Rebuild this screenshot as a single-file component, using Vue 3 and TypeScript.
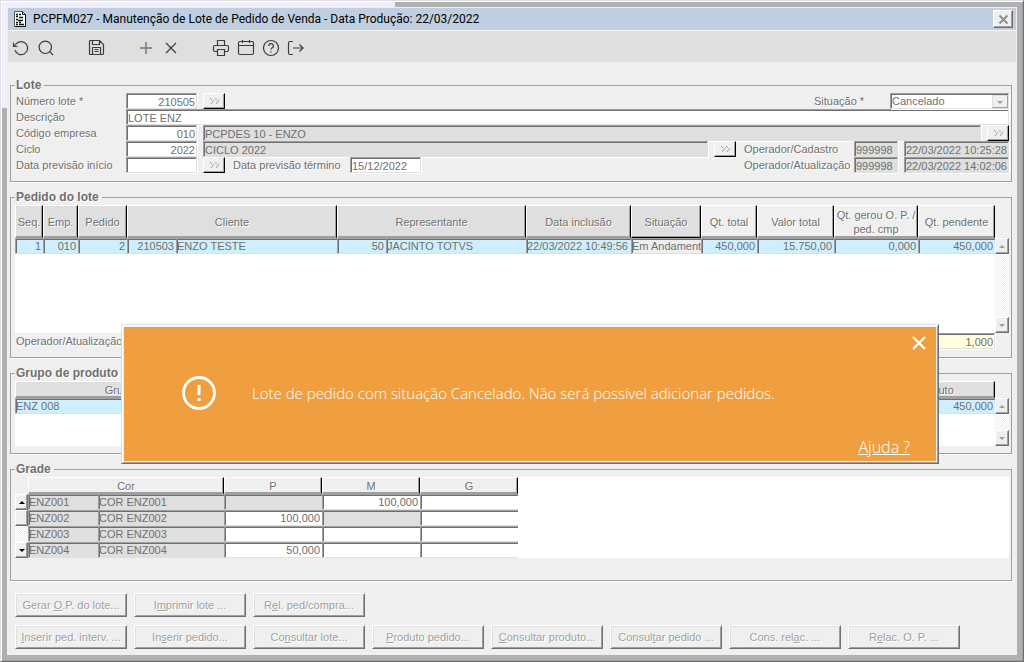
<script setup lang="ts">
import { ref } from 'vue'

interface Order {
  seq: string
  company: string
  order: string
  clientId: string
  client: string
  repId: string
  rep: string
  included: string
  status: string
  total: string
  value: string
  generated: string
  pending: string
}

interface GradeRow {
  code: string
  name: string
  sizes: (string | null)[]
}

interface Action {
  before: string
  key: string
  after: string
}

const orders: Order[] = [
  {
    seq: '1', company: '010', order: '2', clientId: '210503', client: 'ENZO TESTE',
    repId: '50', rep: 'JACINTO TOTVS', included: '22/03/2022 10:49:56', status: 'Em Andament',
    total: '450,000', value: '15.750,00', generated: '0,000', pending: '450,000',
  },
]

// null marks a size that is not available for the colour
const grades: GradeRow[] = [
  { code: 'ENZ001', name: 'COR ENZ001', sizes: [null, '100,000', ''] },
  { code: 'ENZ002', name: 'COR ENZ002', sizes: ['100,000', null, ''] },
  { code: 'ENZ003', name: 'COR ENZ003', sizes: ['', '', ''] },
  { code: 'ENZ004', name: 'COR ENZ004', sizes: ['50,000', '', ''] },
]

const actionRows: Action[][] = [
  [
    { before: 'Gerar ', key: 'O', after: '.P. do lote...' },
    { before: 'I', key: 'm', after: 'primir lote ...' },
    { before: 'R', key: 'e', after: 'l. ped/compra...' },
  ],
  [
    { before: '', key: 'I', after: 'nserir ped. interv. ...' },
    { before: 'In', key: 's', after: 'erir pedido...' },
    { before: 'Co', key: 'n', after: 'sultar lote...' },
    { before: '', key: 'P', after: 'roduto pedido...' },
    { before: '', key: 'C', after: 'onsultar produto...' },
    { before: 'Consul', key: 't', after: 'ar pedido ...' },
    { before: 'Cons. rel', key: 'a', after: 'c. ...' },
    { before: 'R', key: 'e', after: 'lac. O. P. ...' },
  ],
]

const situation = ref('Cancelado')
const showMessage = ref(true)
</script>

<template>
  <div class="frame">
    <main class="window">
      <header class="title-bar">
        <svg class="doc-icon" width="14" height="18" viewBox="0 0 14 18" aria-hidden="true">
          <path d="M1.5 1.5H9.5L12.5 4.5V16.5H1.5Z" fill="#fff" stroke="#555" />
          <path d="M9.5 1.5V4.5H12.5M12.5 5V16.5H2" fill="none" stroke="#111" />
          <path d="M3 4.5H5M6 4.5H8M3 6.5H5M6 7.5H10M3 9.5H5M5 10.5H10M3 12.5H5M6 12.5H8M3 14.5H5M6 14.5H11" stroke="#111" stroke-width="1.4" />
        </svg>
        <h1>PCPFM027 - Manutenção de Lote de Pedido de Venda - Data Produção: 22/03/2022</h1>
        <button class="close" type="button" aria-label="Fechar">
          <svg width="11" height="11" viewBox="0 0 11 11"><path d="M1.5 1.5L9.5 9.5M9.5 1.5L1.5 9.5" stroke="#8f8f8f" stroke-width="2" /></svg>
        </button>
      </header>

      <nav class="toolbar" aria-label="Ferramentas">
        <button type="button" aria-label="Desfazer">
          <svg viewBox="0 0 18 18"><path d="M1.5 3.5V7.5H5.5M1.9 7.2L4.7 4.4A6.5 6.5 0 1 1 3 11.3" /></svg>
        </button>
        <button type="button" aria-label="Pesquisar">
          <svg viewBox="0 0 18 18"><circle cx="8.3" cy="8.3" r="6.2" /><path d="M12.8 12.8L16 16" /></svg>
        </button>
        <button class="at-4" type="button" aria-label="Salvar">
          <svg viewBox="0 0 18 18"><path d="M3.5 1.5H12.5L16.5 5.5V14.5Q16.5 15.5 15.5 15.5H3.5Q2.5 15.5 2.5 14.5V2.5Q2.5 1.5 3.5 1.5ZM5.5 1.5V5.5H12.5V2M5.5 15.5V8.500H13.500V15.500M7.500 10.500H11.500M7.500 12.500H11.500" /></svg>
        </button>
        <button class="at-6 pale" type="button" aria-label="Incluir">
          <svg viewBox="0 0 18 18"><path d="M9 3V15M3 9H15" /></svg>
        </button>
        <button type="button" aria-label="Excluir">
          <svg viewBox="0 0 18 18"><path d="M4 4L14 14M14 4L4 14" /></svg>
        </button>
        <button class="at-9" type="button" aria-label="Imprimir">
          <svg viewBox="0 0 18 18"><path d="M5.500 6.500V1.500H12.500V6.500M5.500 12.500H3Q1.500 12.500 1.500 11V8Q1.500 6.500 3 6.500H15Q16.500 6.500 16.500 8V11Q16.500 12.500 15 12.500H12.500M5.500 10.500H12.500V16.500H5.500Z" /></svg>
        </button>
        <button type="button" aria-label="Calendário">
          <svg viewBox="0 0 18 18"><path d="M3 2.500H15Q16.500 2.500 16.500 4V14Q16.500 15.500 15 15.500H3Q1.500 15.500 1.500 14V4Q1.500 2.500 3 2.500ZM1.500 6.500H16.500M5.500 1V4M12.500 1V4" /></svg>
        </button>
        <button type="button" aria-label="Ajuda">
          <svg viewBox="0 0 18 18"><circle cx="9" cy="9" r="7.500" /><path d="M6.800 7A2.300 2.300 0 1 1 9.900 9Q9 9.400 9 10.500M9 12.200V13.400" /></svg>
        </button>
        <button type="button" aria-label="Sair">
          <svg viewBox="0 0 18 18"><path d="M6 2.500H3Q1.500 2.500 1.500 4V14Q1.500 15.500 3 15.500H6M6 9H16M12.500 5.500L16 9L12.500 12.500" /></svg>
        </button>
      </nav>

      <div class="content">
        <fieldset class="lot">
          <legend>Lote</legend>
          <div class="row">
            <label class="lead" for="lot-number">Número lote *</label>
            <input id="lot-number" class="short num" value="210505" />
            <button class="lookup" type="button" aria-label="Buscar lote">
              <svg viewBox="0 0 11 8"><path d="M1 1L3 3M5 3L2 7M6 1L8 3M10 3L7 7" /></svg>
            </button>
            <span class="spacer"></span>
            <label class="situation-label" for="situation">Situação *</label>
            <span class="select-box">
              <select id="situation" v-model="situation"><option>Cancelado</option></select>
              <i class="caret" aria-hidden="true"></i>
            </span>
          </div>
          <div class="row">
            <label class="lead" for="description">Descrição</label>
            <input id="description" class="grow" value="LOTE ENZ" />
          </div>
          <div class="row">
            <label class="lead" for="company">Código empresa</label>
            <input id="company" class="short num" value="010" />
            <input class="grow locked" aria-label="Empresa" readonly value="PCPDES 10 - ENZO" />
            <button class="lookup" type="button" aria-label="Buscar empresa">
              <svg viewBox="0 0 11 8"><path d="M1 1L3 3M5 3L2 7M6 1L8 3M10 3L7 7" /></svg>
            </button>
          </div>
          <div class="row">
            <label class="lead" for="cycle">Ciclo</label>
            <input id="cycle" class="short num" value="2022" />
            <input class="grow locked" aria-label="Nome do ciclo" readonly value="CICLO 2022" />
            <button class="lookup" type="button" aria-label="Buscar ciclo">
              <svg viewBox="0 0 11 8"><path d="M1 1L3 3M5 3L2 7M6 1L8 3M10 3L7 7" /></svg>
            </button>
            <label class="operator" for="op-created">Operador/Cadastro</label>
            <input id="op-created" class="code locked" readonly value="999998" />
            <input class="stamp locked" aria-label="Data de cadastro" readonly value="22/03/2022 10:25:28" />
          </div>
          <div class="row">
            <label class="lead" for="start">Data previsão início</label>
            <input id="start" class="short" value="" />
            <button class="lookup" type="button" aria-label="Abrir calendário">
              <svg viewBox="0 0 11 8"><path d="M1 1L3 3M5 3L2 7M6 1L8 3M10 3L7 7" /></svg>
            </button>
            <label class="end-label" for="end">Data previsão término</label>
            <input id="end" class="short" value="15/12/2022" />
            <span class="spacer"></span>
            <label class="operator" for="op-updated">Operador/Atualização</label>
            <input id="op-updated" class="code locked" readonly value="999998" />
            <input class="stamp locked" aria-label="Data de atualização" readonly value="22/03/2022 14:02:06" />
          </div>
        </fieldset>

        <fieldset>
          <legend>Pedido do lote</legend>
          <div class="list orders">
            <div class="sheet">
              <table>
                <colgroup>
                  <col class="w28" /><col class="w35" /><col class="w49" /><col class="w49" /><col />
                  <col class="w49" /><col class="w140" /><col class="w105" /><col class="w70" />
                  <col class="w56" /><col class="w77" /><col class="w84" /><col class="w77" />
                </colgroup>
                <thead>
                  <tr>
                    <th>Seq.</th><th>Emp.</th><th>Pedido</th><th colspan="2">Cliente</th>
                    <th colspan="2">Representante</th><th>Data inclusão</th><th class="active">Situação</th>
                    <th class="light">Qt. total</th><th class="light">Valor total</th>
                    <th class="light">Qt. gerou O. P. /<br />ped. cmp</th><th class="light">Qt. pendente</th>
                  </tr>
                </thead>
                <tbody>
                  <tr v-for="o in orders" :key="o.seq" class="selected">
                    <td class="num">{{ o.seq }}</td>
                    <td class="num">{{ o.company }}</td>
                    <td class="num">{{ o.order }}</td>
                    <td class="num">{{ o.clientId }}</td>
                    <td>{{ o.client }}</td>
                    <td class="num">{{ o.repId }}</td>
                    <td>{{ o.rep }}</td>
                    <td>{{ o.included }}</td>
                    <td class="status">{{ o.status }}</td>
                    <td class="num">{{ o.total }}</td>
                    <td class="num">{{ o.value }}</td>
                    <td class="num">{{ o.generated }}</td>
                    <td class="num">{{ o.pending }}</td>
                  </tr>
                </tbody>
              </table>
            </div>
            <div class="scroll tall">
              <button type="button" class="up" aria-label="Rolar pedidos para cima"></button>
              <button type="button" class="down" aria-label="Rolar pedidos para baixo"></button>
            </div>
          </div>
          <div class="row summary">
            <label class="grow" for="order-total">Operador/Atualização</label>
            <input id="order-total" class="total num" readonly value="1,000" />
          </div>
        </fieldset>

        <fieldset>
          <legend>Grupo de produto</legend>
          <div class="list groups">
            <div class="sheet">
              <table>
                <colgroup><col class="w210" /><col /><col class="w121" /></colgroup>
                <thead><tr><th>Grupo</th><th></th><th>Produto</th></tr></thead>
                <tbody><tr class="selected"><td>ENZ 008</td><td></td><td class="num">450,000</td></tr></tbody>
              </table>
            </div>
            <div class="scroll">
              <button type="button" class="up" aria-label="Rolar grupos para cima"></button>
              <button type="button" class="down" aria-label="Rolar grupos para baixo"></button>
            </div>
          </div>
        </fieldset>

        <fieldset class="grade">
          <legend>Grade</legend>
          <div class="list">
            <div class="scroll enabled">
              <button type="button" class="up" aria-label="Rolar grade para cima"></button>
              <span class="thumb"></span>
              <button type="button" class="down" aria-label="Rolar grade para baixo"></button>
            </div>
            <div class="sheet">
              <table>
                <colgroup>
                  <col class="w70" /><col class="w126" /><col class="w98" /><col class="w98" /><col class="w98" />
                </colgroup>
                <thead>
                  <tr><th class="light" colspan="2">Cor</th><th class="light">P</th><th class="light">M</th><th class="light">G</th></tr>
                </thead>
                <tbody>
                  <tr v-for="g in grades" :key="g.code">
                    <td class="off">{{ g.code }}</td>
                    <td class="off">{{ g.name }}</td>
                    <td v-for="(s, i) in g.sizes" :key="i" class="num" :class="{ off: s === null }">{{ s }}</td>
                  </tr>
                </tbody>
              </table>
            </div>
          </div>
        </fieldset>

        <div class="actions">
          <div v-for="(line, i) in actionRows" :key="i" class="action-row">
            <button v-for="a in line" :key="a.before + a.key + a.after" type="button">
              <span>{{ a.before }}<u>{{ a.key }}</u>{{ a.after }}</span>
            </button>
          </div>
        </div>
      </div>
    </main>

    <section v-if="showMessage" class="message" role="alertdialog" aria-labelledby="message-text">
      <button class="dismiss" type="button" aria-label="Fechar mensagem" @click="showMessage = false">
        <svg width="14" height="14" viewBox="0 0 14 14"><path d="M1 1L13 13M13 1L1 13" stroke="#fff" stroke-width="2.200" /></svg>
      </button>
      <div class="message-body">
        <svg width="34" height="34" viewBox="0 0 34 34" aria-hidden="true">
          <circle cx="17" cy="17" r="15.500" fill="none" stroke="#fff" stroke-width="2.800" />
          <path d="M17 9V19M17 22V25" stroke="#fff" stroke-width="3" />
        </svg>
        <p id="message-text">Lote de pedido com situação Cancelado. Não será possível adicionar pedidos.</p>
      </div>
      <a class="help" href="#ajuda">Ajuda ?</a>
    </section>
  </div>
</template>

<style>
body {
  margin: 0;
}
</style>

<style scoped>
* {
  box-sizing: border-box;
}

.frame {
  position: relative;
  min-height: 100vh;
  display: flex;
  padding: 6px;
  border: 1px solid #dfdfdf;
  border-right-color: #6f6f6f;
  border-bottom-color: #6f6f6f;
  box-shadow: inset 1px 1px #fff, inset -1px -1px #9f9f9f;
  background:
    linear-gradient(#f0eefd, #f0eefd) 0 0 / 394px 6px no-repeat,
    linear-gradient(#f0eefd, #f0eefd) 0 0 / 6px 107px no-repeat,
    #b0b0b0;
  font-family: "Liberation Sans", Arial, sans-serif;
  font-size: 11px;
  line-height: 14px;
  color: #6f6f6f;
}

.window {
  flex: 1;
  min-width: 0;
  border: 1px solid #efefef;
  border-bottom: 0;
  background: #efefef;
}

button,
input,
select {
  margin: 0;
  padding: 0;
  border: 0;
  border-radius: 0;
  font: inherit;
  color: inherit;
  background: none;
  outline: 0;
}

button {
  display: flex;
  align-items: center;
  justify-content: center;
}

.title-bar {
  display: flex;
  align-items: center;
  height: 23px;
  padding: 0 3px 0 5px;
  border-bottom: 1px solid #f7f7f7;
  background: #bfcfdf;
}

.title-bar h1 {
  flex: 1;
  margin: 0 0 0 6px;
  font: 400 12px/18px Roboto, "Noto Sans", sans-serif;
  color: #000;
}

.close {
  width: 20px;
  height: 18px;
  background: #efefef;
  border: 1px solid #fff;
  border-right-color: #6f6f6f;
  border-bottom-color: #6f6f6f;
  box-shadow: inset -1px -1px #9f9f9f;
}

.toolbar {
  display: grid;
  grid-template-columns: repeat(12, 25px);
  height: 31px;
  padding-top: 2px;
  align-items: center;
  background: #dfdfdf;
}

.toolbar svg {
  width: 18px;
  height: 18px;
  fill: none;
  stroke: #3c3c3c;
  stroke-width: 1.2;
}

.toolbar .pale svg {
  stroke: #777;
  stroke-width: 1.5;
}

.at-4 {
  grid-column: 4;
}

.at-6 {
  grid-column: 6;
}

.at-9 {
  grid-column: 9;
}

.content {
  padding: 15px 4px 5px 2px;
}

fieldset {
  min-width: 0;
  margin: 0 0 7px;
  padding: 0 2px 7px 4px;
  border: 1px solid #9f9f9f;
  box-shadow: 0 1px #fff;
}

.lot {
  padding-bottom: 8px;
}

legend {
  padding: 0 3px 0 1px;
  font-size: 12px;
  font-weight: 700;
  line-height: 16px;
  text-shadow: 1px 1px #fff;
}

label,
th {
  text-shadow: 1px 1px #fff;
}

label {
  padding-left: 1px;
  line-height: 16px;
  white-space: nowrap;
}

.row {
  display: flex;
  gap: 6px;
  height: 16px;
}

.row input,
.select-box {
  height: 16px;
  min-width: 0;
  padding: 1px 1px 0;
  border: 1px solid #dfdfdf;
  border-top-color: #9f9f9f;
  border-left-color: #9f9f9f;
  box-shadow: inset 1px 1px #6f6f6f, 1px 1px #fff;
  background: #fff;
}

.row .locked {
  background: #dfdfdf;
}

.lead {
  width: 105px;
}

.short {
  width: 71px;
}

.num {
  text-align: right;
}

.grow,
.spacer {
  flex: 1;
}

.situation-label {
  width: 71px;
}

.select-box {
  position: relative;
  width: 119px;
  padding: 0;
}

.select-box select {
  width: 100%;
  height: 14px;
  padding-left: 1px;
  appearance: none;
  line-height: 14px;
}

.caret {
  position: absolute;
  top: 1px;
  right: 0;
  width: 16px;
  height: 13px;
  border: 1px solid #dfdfdf;
  border-right-color: #9f9f9f;
  border-bottom-color: #9f9f9f;
  background: #efefef;
  pointer-events: none;
}

.caret::after {
  content: "";
  position: absolute;
  top: 5px;
  left: 4px;
  border: 3px solid transparent;
  border-top-color: #9f9f9f;
  border-bottom: 0;
}

.lookup {
  width: 22px;
  height: 16px;
  border: 1px solid #fff;
  border-right-color: #000;
  border-bottom-color: #000;
  box-shadow: inset -1px -1px #9f9f9f;
  background: #efefef;
}

.lookup svg {
  width: 11px;
  height: 8px;
  fill: none;
  stroke: #9f9f9f;
}

.operator {
  width: 106px;
  padding-left: 2px;
}

.code {
  width: 44px;
}

.row .stamp {
  width: 105px;
  padding-right: 0;
}

.end-label {
  width: 113px;
  padding-left: 2px;
}

.list {
  display: flex;
}

.sheet {
  flex: 1;
  min-width: 0;
  background: #fff;
}

.orders {
  height: 128px;
}

.groups {
  height: 65px;
}

table {
  width: 100%;
  table-layout: fixed;
  border-collapse: separate;
  border-spacing: 0;
}

th,
td {
  height: 16px;
  padding: 0;
  overflow: hidden;
  white-space: nowrap;
}

th {
  height: 17px;
  border: 1px solid #fff;
  border-right-color: #000;
  border-bottom-color: #9f9f9f;
  box-shadow: inset -1px -1px #9f9f9f;
  background: #dfdfdf;
  font-weight: 400;
  line-height: 14px;
}

.orders th {
  height: 33px;
}

th.light {
  background: #efefef;
}

th.active {
  border-bottom-color: #000;
}

td {
  padding: 1px 0 0;
  border: 1px solid #dfdfdf;
  border-top-color: #9f9f9f;
  border-left-color: #9f9f9f;
  border-right: 0;
  box-shadow: inset 1px 1px #6f6f6f;
  line-height: 13px;
}

.selected td {
  background: #cfefff;
}

.selected .status {
  background: #efefef;
}

td.off {
  background: #dfdfdf;
}

td.num {
  padding-right: 2px;
}

.w28 { width: 28px; }
.w35 { width: 35px; }
.w49 { width: 49px; }
.w56 { width: 56px; }
.w70 { width: 70px; }
.w77 { width: 77px; }
.w84 { width: 84px; }
.w98 { width: 98px; }
.w105 { width: 105px; }
.w121 { width: 121px; }
.w126 { width: 126px; }
.w140 { width: 140px; }
.w210 { width: 210px; }

.scroll {
  display: flex;
  flex-direction: column;
  width: 14px;
  margin-top: 17px;
  background: repeating-conic-gradient(#fff 0 25%, #efefef 0 50%) 0 0 / 2px 2px;
}

.scroll.tall {
  margin-top: 33px;
}

.scroll.enabled {
  width: 13px;
}

.scroll button,
.thumb {
  width: 100%;
  height: 16px;
  border: 1px solid #fff;
  border-right-color: #6f6f6f;
  border-bottom-color: #6f6f6f;
  box-shadow: inset -1px -1px #9f9f9f;
  background: #efefef;
}

.scroll .down {
  margin-top: auto;
}

.scroll button::after {
  content: "";
  border: 3px solid transparent;
}

.scroll .up::after {
  border-top: 0;
  border-bottom-color: #9f9f9f;
}

.scroll .down::after {
  border-bottom: 0;
  border-top-color: #9f9f9f;
}

.scroll.enabled .up::after {
  border-bottom-color: #000;
}

.scroll.enabled .down::after {
  border-top-color: #000;
}

.summary {
  padding-right: 14px;
  height: 17px;
}

.summary .total {
  width: 77px;
  background: #ffffdf;
}

.grade {
  margin-bottom: 12px;
  padding-bottom: 22px;
}

.grade table {
  width: 490px;
}

.actions {
  display: grid;
  gap: 8px;
  padding-left: 5px;
}

.action-row {
  display: flex;
  gap: 7px;
}

.action-row button {
  width: 112px;
  height: 24px;
  border: 1px solid #fff;
  border-right-color: #6f6f6f;
  border-bottom-color: #6f6f6f;
  box-shadow: inset 1px 1px #dfdfdf, inset -1px -1px #9f9f9f;
  color: #9f9f9f;
  text-shadow: 1px 1px #fff;
  white-space: nowrap;
}

.message {
  position: absolute;
  top: 323px;
  left: 120px;
  right: 84px;
  height: 140px;
  display: flex;
  flex-direction: column;
  border: 1px solid #dfdfdf;
  border-right-color: #6f6f6f;
  border-bottom-color: #6f6f6f;
  box-shadow: inset 1px 1px #fff, inset -1px -1px #9f9f9f, inset 2px 2px #efefef, inset -2px -2px #efefef;
  background: #ef9f40;
  color: #fff;
  font-family: "Open Sans", "Noto Sans", sans-serif;
  font-weight: 300;
}

.dismiss {
  align-self: flex-end;
  width: 20px;
  height: 20px;
  margin: 8px 9px 0 0;
}

.message-body {
  flex: 1;
  display: flex;
  align-items: center;
  gap: 36px;
  padding: 0 0 4px 60px;
}

.message-body p {
  margin: 0;
  font-size: 15px;
  line-height: 20px;
  white-space: nowrap;
}

.help {
  align-self: flex-end;
  margin: 0 28px 6px 0;
  color: #fff;
  font-size: 16px;
  line-height: 20px;
}
</style>
